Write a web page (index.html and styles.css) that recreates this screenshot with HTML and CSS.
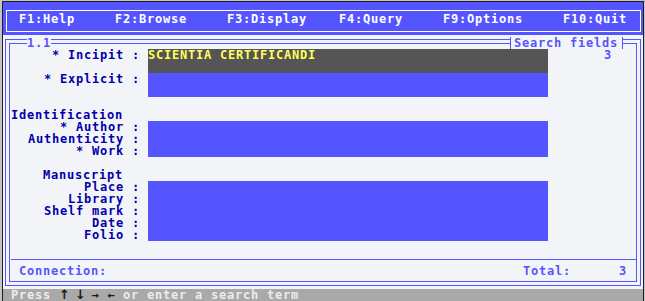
FILE: index.html
```html
<!DOCTYPE html>
<html>
<head>
<meta charset="utf-8">
<link rel="stylesheet" href="styles.css">
</head>
<body>
<div class="screen">
  <header class="menubar">
    <nav class="menubox">
      <span class="menu-item">F1:Help</span>
      <span class="menu-item">F2:Browse</span>
      <span class="menu-item">F3:Display</span>
      <span class="menu-item">F4:Query</span>
      <span class="menu-item">F9:Options</span>
      <span class="menu-item">F10:Quit</span>
    </nav>
  </header>
  <main class="panel">
    <div class="frame-outer">
      <div class="frame-inner">
        <span class="tag tag-left">1.1</span>
        <span class="tag tag-right">Search fields</span>
        <div class="form">
          <div class="label r1">* Incipit :</div>
          <div class="field field-active r1 h2">SCIENTIA CERTIFICANDI</div>
          <div class="count r1">3</div>

          <div class="label r3">* Explicit :</div>
          <div class="field r3 h2"></div>

          <div class="group r6 indent1">Identification</div>
          <div class="label r7">* Author :</div>
          <div class="label r8">Authenticity :</div>
          <div class="label r9">* Work :</div>
          <div class="field r7 h3"></div>

          <div class="group r11 indent5">Manuscript</div>
          <div class="label r12">Place :</div>
          <div class="label r13">Library :</div>
          <div class="label r14">Shelf mark :</div>
          <div class="label r15">Date :</div>
          <div class="label r16">Folio :</div>
          <div class="field r12 h5"></div>
        </div>
        <div class="separator"></div>
        <div class="footer">
          <span class="info">Connection:</span>
          <span class="info">Total:</span>
          <span class="info">3</span>
        </div>
      </div>
    </div>
  </main>
  <footer class="status">Press <span class="key key-big">↑</span> <span class="key key-big">↓</span> <span class="key">→</span> <span class="key">←</span> or enter a search term</footer>
</div>
</body>
</html>
```

FILE: styles.css
```css
html, body {
  margin: 0;
  padding: 0;
}

body {
  width: 645px;
  height: 301px;
  overflow: hidden;
  background: #c4c4c4;
  font-family: "DejaVu Sans Mono", monospace;
  font-weight: bold;
  font-size: 12px;
  line-height: 12px;
  letter-spacing: 0.7754px;
}

.screen {
  margin: 1px 0 0 2px;
  width: 640px;
  height: 300px;
  border-left: 1px solid #1e1e1e;
  border-top: 1px solid #1e1e1e;
  border-right: 1px solid #1e1e1e;
  display: flex;
  flex-direction: column;
}

/* ---------- top menu ---------- */
.menubar {
  height: 33px;
  box-sizing: border-box;
  background: #5555ff;
  padding: 8px 2px 3px 3px;
}

.menubox {
  height: 22px;
  box-sizing: border-box;
  border: 1px solid #ffffff;
  padding: 2px 0 0 12px;
  display: grid;
  grid-template-columns: 96px 112px 112px 104px 120px auto;
  color: #ffffff;
}

/* ---------- main panel ---------- */
.panel {
  height: 254px;
  box-sizing: border-box;
  background: #f3f4f8;
  padding: 4px 2px 3px 2px;
}

.frame-outer {
  height: 100%;
  box-sizing: border-box;
  border: 1px solid #5555ff;
  padding: 3px;
}

.frame-inner {
  position: relative;
  height: 100%;
  box-sizing: border-box;
  border: 1px solid #5555ff;
  padding-top: 5px;
  display: flex;
  flex-direction: column;
}

.tag {
  position: absolute;
  top: -7px;
  height: 12px;
  background: #f3f4f8;
  color: #5555ff;
}

.tag-left {
  left: 17px;
}

.tag-right {
  left: 500px;
  box-sizing: border-box;
  border-left: 1px solid #5555ff;
  border-right: 1px solid #5555ff;
  padding: 0 4px 0 3px;
}

.form {
  display: grid;
  grid-template-columns: 130px 8px 400px 1fr;
  grid-template-rows: repeat(17, 12px);
  color: #0000aa;
}

.label {
  grid-column: 1;
  text-align: right;
  white-space: pre;
}

.group {
  grid-column: 1 / 4;
  white-space: pre;
}

.indent1 { padding-left: 1px; }
.indent5 { padding-left: 33px; }

.field {
  grid-column: 3;
  background: #5555ff;
}

.field-active {
  background: #555555;
  color: #ffff55;
}

.count {
  grid-column: 4;
  padding-left: 56px;
  color: #5555ff;
}

.r1 { grid-row-start: 1; }
.r3 { grid-row-start: 3; }
.r6 { grid-row-start: 6; }
.r7 { grid-row-start: 7; }
.r8 { grid-row-start: 8; }
.r9 { grid-row-start: 9; }
.r11 { grid-row-start: 11; }
.r12 { grid-row-start: 12; }
.r13 { grid-row-start: 13; }
.r14 { grid-row-start: 14; }
.r15 { grid-row-start: 15; }
.r16 { grid-row-start: 16; }

.h2 { grid-row-end: span 2; }
.h3 { grid-row-end: span 3; }
.h5 { grid-row-end: span 5; }

.separator {
  margin: 6px 0 5px 1px;
  border-top: 1px solid #5555ff;
}

.footer {
  display: grid;
  grid-template-columns: 504px 96px auto;
  padding-left: 9px;
  height: 12px;
  color: #5555ff;
}

/* ---------- status line ---------- */
.status {
  height: 12px;
  background: #a9a9a9;
  color: #ececec;
  padding-left: 8px;
  white-space: pre;
}

.key {
  display: inline-block;
  width: 8px;
  letter-spacing: 0;
  text-align: center;
  color: #1a1a1a;
}

.key-big {
  font-family: "DejaVu Sans", sans-serif;
  font-size: 13px;
  overflow: visible;
}
```
